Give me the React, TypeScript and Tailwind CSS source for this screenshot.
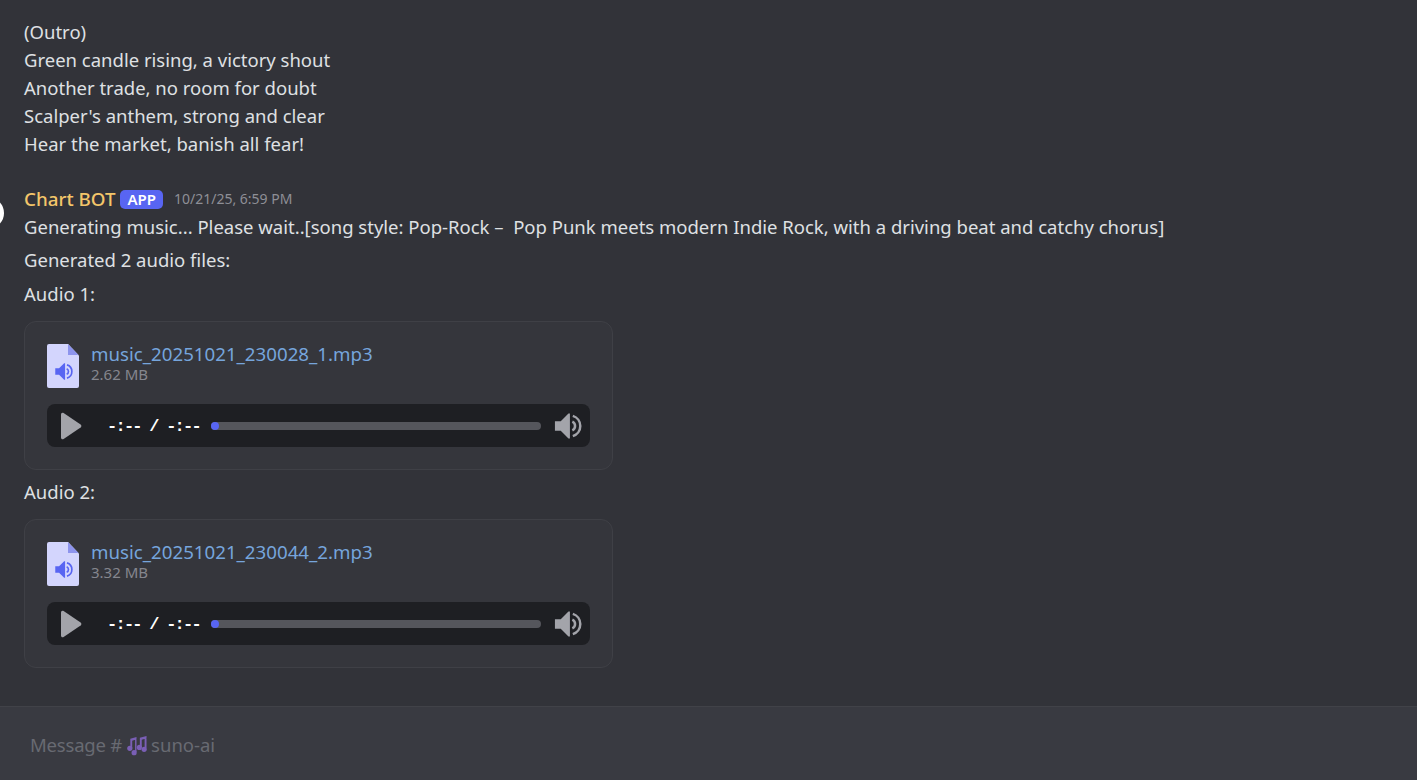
const FONT = "[font-family:'Noto_Sans',sans-serif]";

function SpeakerIcon({ className }: { className?: string }) {
  return (
    <svg viewBox="0 0 30 30" className={className} fill="currentColor">
      <path d="M2 10h6l8-8h1.500v26H16l-8-8H2z" />
      <path d="M20 10.500a5 5 0 0 1 0 9" fill="none" stroke="currentColor" strokeWidth="2.600" />
      <path d="M20.500 4.500a11 11 0 0 1 0 21" fill="none" stroke="currentColor" strokeWidth="2.600" />
    </svg>
  );
}

function AudioCard({ name, size }: { name: string; size: string }) {
  return (
    <div className="w-[589px] h-[149px] rounded-xl border border-[#3f4046] bg-[#35363c] pt-[22px] px-[22px]">
      <div className="flex gap-3 h-11">
        <div className="relative w-8 h-11 shrink-0 flex items-end justify-center pb-[7px] bg-[#d3d5fd] rounded-[2px] [clip-path:polygon(0_0,66%_0,100%_26%,100%_100%,0_100%)]">
          <div className="absolute top-0 right-0 w-[11px] h-[11px] bg-[#8d94ed] [clip-path:polygon(0_0,100%_100%,0_100%)]" />
          <SpeakerIcon className="w-[19px] h-[19px] text-[#5865f2]" />
        </div>
        <div className="flex flex-col">
          <span className="text-[18.700px] leading-[22px] -mt-px text-[#76a5dc]">{name}</span>
          <span className="text-[15px] leading-[19px] text-[#85868e]">{size}</span>
        </div>
      </div>
      <div className="mt-4 w-[543px] h-[43px] rounded-lg bg-[#1e1f23] flex items-center pl-[13px] pr-[8px]">
        <svg viewBox="0 0 22 28" className="w-[22px] h-[28px] text-[#a3a4aa] shrink-0" fill="currentColor">
          <path d="M1 2.500c0-1.500 1.300-2.300 2.600-1.500l17 11.500c1 .7 1 2.300 0 3L3.600 27c-1.300.8-2.600 0-2.600-1.500z" />
        </svg>
        <span className="ml-[25px] w-[93px] shrink-0 pt-[2px] font-['Liberation_Mono',monospace] text-[17px] tracking-[-1.750px] font-bold text-white whitespace-nowrap">-:-- / -:--</span>
        <div className="ml-[11px] w-[330px] h-2 rounded-sm bg-[#55565c] shrink-0 flex items-center">
          <div className="w-2 h-2 rounded-full bg-[#5865f2]" />
        </div>
        <SpeakerIcon className="ml-[12px] w-[30px] h-[30px] text-[#a3a4aa]" />
      </div>
    </div>
  );
}

export default function App() {
  return (
    <div className={`relative w-[1417px] h-[780px] overflow-hidden flex flex-col bg-[#323339] text-[#dfe0e3] ${FONT}`}>
      <div className="flex-1 pt-[18px] pl-6">
        <div className="text-[18.500px] leading-7">
          <p>(Outro)</p>
          <p>Green candle rising, a victory shout</p>
          <p>Another trade, no room for doubt</p>
          <p>Scalper's anthem, strong and clear</p>
          <p>Hear the market, banish all fear!</p>
        </div>

        <div className="mt-[27px] flex items-center h-7">
          <span className="text-[18.800px] font-medium text-[#f4c66a]">Chart BOT</span>
          <span className="ml-[5px] h-[19px] px-[7px] rounded-[5px] bg-[#5865f2] text-white text-[15px] leading-[19px] font-semibold">APP</span>
          <span className="ml-[11px] text-sm text-[#8e8f96]">10/21/25, 6:59 PM</span>
        </div>
        <p className="text-[18.500px] leading-7 whitespace-nowrap">Generating music... Please wait..[song style: Pop-Rock – &nbsp;Pop Punk meets modern Indie Rock, with a driving beat and catchy chorus]</p>
        <p className="mt-[5px] text-[18.500px] leading-7">Generated 2 audio files:</p>
        <p className="mt-[6px] text-[18.500px] leading-7">Audio 1:</p>
        <div className="mt-[13px]">
          <AudioCard name="music_20251021_230028_1.mp3" size="2.62 MB" />
        </div>
        <p className="mt-2 text-[18.500px] leading-7">Audio 2:</p>
        <div className="mt-[13px]">
          <AudioCard name="music_20251021_230044_2.mp3" size="3.32 MB" />
        </div>
      </div>

      <div className="h-[74px] shrink-0 border-t border-[#414248] bg-[#393a41] flex items-center pt-[3px] pl-[30px] text-[18.500px] text-[#686a72]">
        <span className="tracking-[-0.200px]">Message #</span>
        <svg viewBox="0 0 22 22" className="ml-1 mr-1 w-[21px] h-[21px] text-[#7a5fb5]" fill="currentColor">
          <path d="M4.500 4l6.500-2v2.400L6.500 6v7.500h-2zM9.500 4h1.500v14H9.500z" />
          <circle cx="4" cy="14" r="2.700" />
          <circle cx="8.500" cy="18.500" r="2.700" />
          <path d="M14.500 3l7-2v2.400L16.500 5v7.500h-2zM19.500 2.500h2V14h-2z" />
          <circle cx="14" cy="13" r="2.700" />
          <circle cx="19" cy="15" r="2.700" />
        </svg>
        <span>suno-ai</span>
      </div>

      <div className="absolute -left-7 top-[197px] w-8 h-8 rounded-full bg-white" />
    </div>
  );
}
